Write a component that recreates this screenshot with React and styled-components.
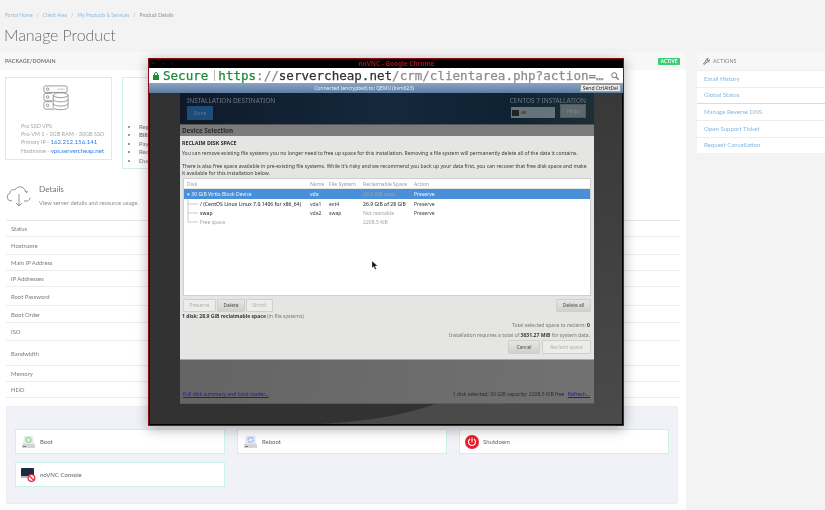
import React from "react";
import styled, { createGlobalStyle } from "styled-components";
import { Wrench } from "lucide-react";

const Global = createGlobalStyle`
  html, body { margin: 0; padding: 0; background: #f3f3f3; }
  body { font-family: Lato, "Noto Sans", sans-serif; overflow: hidden; }
  * { box-sizing: border-box; }
`;

const Page = styled.div`
  position: relative; width: 825px; height: 510px; overflow: hidden;
  background: #f3f3f3; filter: blur(0.35px);
`;
const Crumbs = styled.div`
  display: flex; gap: 4px; height: 24px; padding: 11px 0 0 5px;
  font-size: 5px; line-height: 8px; color: #a8adb2;
`;
const CrumbLink = styled.span` color: ${p => (p.$current ? "#8d9398" : "#86bde8")}; `;
const Title = styled.h1`
  margin: 0; height: 28px; padding-left: 4px; font-size: 16px; letter-spacing: -.1px; font-weight: 300; line-height: 22px; color: #666c72;
`;
const Columns = styled.div` display: grid; grid-template-columns: 686px 128px; column-gap: 11px; `;
const Main = styled.main` background: #fff; height: 458px; `;
const PanelHead = styled.div`
  display: flex; align-items: center; justify-content: space-between; height: 18px; padding: 0 6px 0 5px;
  background: #f7f7f7; font-size: 5.3px; font-weight: 700; letter-spacing: .1px; color: #70757a; text-transform: uppercase;
`;
const Badge = styled.span`
  background: #3ccf7a; color: #fff; font-size: 4.6px; line-height: 7px; padding: 0 2.500px; border-radius: 1px;
`;
const Cards = styled.div` display: flex; gap: 10px; padding: 7px 5px 0; height: 115px; align-items: flex-start; `;
const InfoCard = styled.div`
  width: ${p => p.$w}px; height: ${p => p.$h}px; border: 1px solid #cdf3e8; flex: none; background: #fff;
`;
const ProductCard = styled(InfoCard)`
  display: flex; flex-direction: column; align-items: center; padding: 7px 6px 0 0;
`;
const ProductLines = styled.div`
  align-self: flex-start; margin: 11px 0 0 15px; font-size: 5.5px; line-height: 8.2px; color: #a2a5a8; white-space: nowrap;
`;
const Accent = styled.span` color: #2e7be8; font-size: 6.1px; `;
const Bullets = styled.ul`
  margin: 45px 0 0; padding: 0 0 0 16px; font-size: 6.1px; line-height: 8.4px; color: #777; white-space: nowrap;
`;
const DetailsHead = styled.div` display: flex; gap: 8px; height: 33px; padding-left: 6px; margin-bottom: 2px; `;
const DetailsTitle = styled.div` font-size: 8.2px; line-height: 11px; color: #71767b; margin-top: -1px; `;
const DetailsSub = styled.div` font-size: 5.8px; line-height: 8px; color: #8b8f93; margin-top: 4px; `;
const Rows = styled.div` margin: 0 6px; border-top: 1px solid #e8e8e8; `;
const Row = styled.div`
  display: flex; align-items: center; height: ${p => p.$h}px; padding-left: 5px;
  border-bottom: 1px solid #ececec; font-size: 5.9px; color: #777b7f;
`;
const ActionsPanel = styled.section`
  margin: 8px 8px 0 6px; height: 98px; padding: 22px 8px 0; background: #f1f2f7; border: 1px solid #ebecf0; border-radius: 2px;
  display: grid; grid-template-columns: repeat(3, 210px); grid-auto-rows: 25px; gap: 8px 12px;
`;
const ActionButton = styled.div`
  display: flex; align-items: center; gap: 4px; padding-left: 5px; background: #fff; border: 1px solid #cdf3e8;
  font-size: 6px; color: #5f6468;
`;
const Side = styled.aside` height: 101px; background: #fff; `;
const SideHead = styled(PanelHead)`
  justify-content: flex-start; gap: 3px; padding-left: 6px; color: #7c8186; font-weight: 400;
`;
const SideItem = styled.div`
  height: ${p => p.$h}px; display: flex; align-items: center; padding: 0 0 2px 7px; font-size: 6.1px; color: #82b8e6;
  border-top: 1px solid ${p => (p.$strong ? "#dcdcdc" : "#eeeeee")};
`;

/* noVNC window */
const VncWindow = styled.div`
  position: absolute; left: 148px; top: 58px; width: 476px; height: 368px;
  display: flex; flex-direction: column; background: #000; border: 1px solid #8c0e14; box-shadow: 0 3px 12px rgba(0,0,0,.32);
`;
const TitleBar = styled.div`
  position: relative; height: 9px; flex: none; padding-left: 21px; text-align: center; font: 700 6.4px/9px "Noto Sans", sans-serif; color: #a3121a;
`;
const WinDots = styled.span`
  position: absolute; left: 3px; top: 0; display: flex; gap: 7px; font-size: 5px; color: #6e1014;
`;
const UrlBar = styled.div`
  display: flex; align-items: center; height: 15px; flex: none; padding: 0 4px; background: #fff;
  font: 12.55px/15px "DejaVu Sans Mono", monospace; white-space: nowrap; color: #333; -webkit-text-stroke: .25px currentColor;
`;
const Lock = styled.svg` width: 6px; height: 8px; margin-right: 4px; flex: none; `;
const Green = styled.span` color: #1f8a3c; `;
const Sep = styled.span` width: 1px; height: 11px; background: #bbb; margin: 0 3px 0 6px; flex: none; `;
const Faded = styled.span` color: #8d8d8d; `;
const Search = styled.svg` width: 8px; height: 8px; margin-left: auto; flex: none; `;
const StatusBar = styled.div`
  position: relative; height: 10px; flex: none; padding-right: 44px; text-align: center; background: linear-gradient(#8ba3c4, #5e7da6);
  font: 5px/10px "Noto Sans", sans-serif; color: #eef2f7;
`;
const CtrlBtn = styled.span`
  position: absolute; right: 2px; top: 1px; height: 8px; width: 41px; background: #e8e8e8; color: #222; font-size: 5px; line-height: 7px; border: 1px solid #999;
`;
const Desktop = styled.div`
  position: relative; flex: 1; margin: 0 1px 1px; padding-left: 30px; background: #323232; overflow: hidden;
  font-family: "Noto Sans", sans-serif;
`;
const Wallpaper = styled.svg` position: absolute; inset: 0; width: 100%; height: 100%; `;
const Anaconda = styled.div` position: relative; width: 414px; height: 311px; display: flex; flex-direction: column; `;
const Hub = styled.div`
  display: flex; justify-content: space-between; height: 31px; flex: none; padding: 3px 8px 0 7px;
  background: linear-gradient(90deg, #0e1a2a, #15283c 50%, #0f2233 80%, #1c2f37);
  font-size: 6.5px; line-height: 9px; color: #6e7a84;
`;
const HubCol = styled.div` display: flex; flex-direction: column; align-items: ${p => p.$right ? "flex-end" : "flex-start"}; `;
const HubButtons = styled.div` display: flex; gap: 5px; align-items: flex-end; margin-top: -1px; `;
const Done = styled.div`
  width: 26px; height: 14px; margin-top: 1px; background: #1d4c78; color: #58799a; font-size: 5px; line-height: 14px; text-align: center;
`;
const Kbd = styled.div`
  display: flex; align-items: center; gap: 2px; width: 44px; height: 11px; padding-left: 1px; background: #66747a; color: #1a1a1a; font-size: 4.6px;
`;
const KbdIcon = styled.span` width: 7px; height: 6px; background: #222; `;
const HelpBtn = styled.div`
  width: 26px; height: 14px; background: #5d696d; color: #7f8a8d; border: 1px solid #4f5a5e; font-size: 5px; line-height: 12px; text-align: center;
`;
const SpokeBar = styled.div`
  height: 12px; flex: none; padding-left: 2px; background: #7b7b7b; border-top: 1px solid #555;
  font-size: 6.3px; line-height: 11px; font-weight: 700; color: #2c2c2c;
`;
const Dialog = styled.div`
  height: 224px; flex: none; display: flex; flex-direction: column; padding: 4px 3px 0; background: #e5e5e3; color: #3a3a3a; font-size: 5.07px; line-height: 7px;
  border-bottom: 1px solid #a8a8a8; white-space: nowrap;
`;
const DialogHead = styled.div` font-weight: 700; font-size: 5.3px; margin-left: -1px; color: #2c2c2c; `;
const Para = styled.p` margin: ${p => p.$top}px 0 0 -1px; `;
const Table = styled.div`
  height: 118px; flex: none; margin: 1px 0 0; background: #fff; border: 1px solid #cfcfcd; position: relative;
`;
const TableRow = styled.div`
  display: grid; grid-template-columns: 125px 19px 34px 51px 1fr; height: ${p => p.$h}px; line-height: ${p => p.$h}px; padding-left: 1px;
  background: ${p => (p.$selected ? "#4a90d9" : "transparent")}; color: ${p => (p.$selected ? "#f4f8fc" : p.$dim ? "#a3a3a3" : "#3a3a3a")};
  ${p => p.$head && "color:#9a9a9a; border-bottom:1px solid #e4e4e4;"}
`;
const Cell = styled.span`
  padding-left: ${p => p.$pad || 0}px; ${p => p.$dim && "color:#a3a3a3;"} ${p => p.$b && "font-weight:500;"}
  overflow: hidden;
`;
const Spacer = styled.div` height: ${p => p.$h}px; `;
const ToolRow = styled.div` display: flex; justify-content: space-between; margin-top: 3px; `;
const ToolGroup = styled.div` display: flex; gap: 1px; `;
const Gtk = styled.div`
  width: ${p => p.$w}px; height: ${p => p.$h || 13}px; line-height: ${p => (p.$h || 13) - 2}px; text-align: center;
  font-size: 4.9px; border: 1px solid #cfcfcd; border-radius: 1px;
  color: ${p => (p.$off ? "#b0b0ae" : "#4c4c4c")};
  background: ${p => (p.$off ? "#ececea" : "linear-gradient(#e6e6e4,#d0d0ce)")};
`;
const Reclaimable = styled.div` margin: 1px 0 0 -1px; `;
const Muted = styled.span` color: #777; `;
const RightLine = styled.div` text-align: right; margin-top: ${p => p.$top}px; padding-right: 1px; `;
const DialogActions = styled.div` display: flex; justify-content: flex-end; gap: 2px; margin-top: 1px; `;
const Bottom = styled.div`
  height: 44px; flex: none; display: flex; justify-content: space-between; align-items: flex-end; padding: 0 4px 5px 3px;
  background: linear-gradient(100deg, #646464, #727272); border-bottom: 1px solid #5a5a5a; font-size: 5.07px; line-height: 7px; color: #2c2c2c;
`;
const DiskLink = styled.span` color: #1e1e96; text-decoration: underline; margin-left: ${p => p.$left || 0}px; `;
const Pointer = styled.svg` position: absolute; left: 223px; top: 202px; width: 6px; height: 9px; `;
const TreeLines = styled.svg` position: absolute; left: 2px; top: 20px; width: 14px; height: 29px; `;

const ServerIcon = () => (
  <svg width="26" height="26" viewBox="0 0 28 28" fill="none" stroke="#888" strokeWidth=".9">
    <rect x="1" y="1" width="25" height="7" rx="1.5" />
    <circle cx="5" cy="4.5" r="1.4" />
    <path d="M16 4.5h7" strokeDasharray="1 .6" />
    <path d="M10 9H3a2 2 0 0 0-2 2v4a2 2 0 0 0 2 2h7M10 18H3a2 2 0 0 0-2 2v4a2 2 0 0 0 2 2h9" />
    <circle cx="5" cy="13" r="1.4" /><circle cx="5" cy="22" r="1.4" />
    <ellipse cx="19" cy="11" rx="8" ry="2.6" />
    <path d="M11 11v13c0 1.5 3.6 2.6 8 2.6s8-1.1 8-2.6V11M11 15.5c0 1.5 3.6 2.6 8 2.6s8-1.1 8-2.6M11 20c0 1.5 3.6 2.6 8 2.6s8-1.1 8-2.6" />
  </svg>
);
const CloudIcon = () => (
  <svg width="25" height="22" viewBox="0 0 25 22" fill="none" stroke="#777" strokeWidth=".8" style={{ flex: "none" }}>
    <path d="M6 16H5a4 4 0 0 1-1-7.8C4.5 4.5 7 4 9 5c1-3 6-4.500 9-1.500 1 1 1.500 2 1.500 3.500M20 8l1.500-1.500M19 6.500l2.500.5M18 16h3.500c1.500-.5 2.500-2 2.500-3.500" />
    <path d="M13 9v12M10 18l3 3 3-3" />
  </svg>
);
const DiskIcon = ({ tint, children }) => (
  <svg width="15" height="13" viewBox="0 0 15 13" style={{ flex: "none" }}>
    <rect x="1" y="9" width="13" height="4" fill="#d5d5d5" />
    <rect x="2" y="11" width="3" height="1" fill="#777" />
    <path d="M2 9l1-8h9l1 8z" fill={tint} />
    {children}
  </svg>
);
const ConsoleIcon = () => (
  <svg width="15" height="14" viewBox="0 0 15 14" style={{ flex: "none" }}>
    <rect x="0" y="0" width="13" height="9" rx="1" fill="#1d2a44" />
    <rect x="0" y="8" width="13" height="2" fill="#bbb" />
    <circle cx="10.500" cy="10" r="3.300" fill="#fff" stroke="#ea2b3a" strokeWidth="1.300" />
    <path d="M8.300 8l4.400 4" stroke="#ea2b3a" strokeWidth="1.200" />
  </svg>
);
const PowerIcon = () => (
  <svg width="14" height="14" viewBox="0 0 14 14" style={{ flex: "none" }}>
    <circle cx="7" cy="7" r="7" fill="#ec1c2c" />
    <path d="M4.800 4.300a3.500 3.500 0 1 0 4.400 0M7 3v3.800" fill="none" stroke="#fff" strokeWidth="1.100" strokeLinecap="round" />
  </svg>
);

const rows = [["Status", 16], ["Hostname", 18], ["Main IP Address", 16], ["IP Addresses", 16], ["Root Password", 19], ["Boot Order", 17], ["ISO", 18], ["Bandwidth", 25], ["Memory", 16], ["HDD", 16]];
const actions = [["Email History", 17], ["Global Status", 16], ["Manage Reverse DNS", 17, true], ["Open Support Ticket", 17], ["Request Cancellation", 16]];

export default function App() {
  return (
    <Page>
      <Global />
      <Crumbs>
        <CrumbLink>Portal Home</CrumbLink><span>/</span>
        <CrumbLink>Client Area</CrumbLink><span>/</span>
        <CrumbLink>My Products &amp; Services</CrumbLink><span>/</span>
        <CrumbLink $current>Product Details</CrumbLink>
      </Crumbs>
      <Title>Manage Product</Title>
      <Columns>
        <Main>
          <PanelHead>Package/Domain<Badge>ACTIVE</Badge></PanelHead>
          <Cards>
            <ProductCard $w={107} $h={83}>
              <ServerIcon />
              <ProductLines>
                Pro SSD VPS<br />
                Pro-VM 1 - 2GB RAM - 30GB SSD<br />
                Primary IP - <Accent>162.212.156.141</Accent><br />
                Hostname - <Accent>vps.servercheap.net</Accent>
              </ProductLines>
            </ProductCard>
            <InfoCard $w={200} $h={92}>
              <Bullets>
                <li>Registration Date</li>
                <li><b>Billing Cycle</b></li>
                <li>Payment Method</li>
                <li>Recurring Amount</li>
                <li>Due Date</li>
              </Bullets>
            </InfoCard>
          </Cards>
          <DetailsHead>
            <CloudIcon />
            <div>
              <DetailsTitle>Details</DetailsTitle>
              <DetailsSub>View server details and resource usage.</DetailsSub>
            </div>
          </DetailsHead>
          <Rows>
            {rows.map(([label, h]) => <Row key={label} $h={h}>{label}</Row>)}
          </Rows>
          <ActionsPanel>
            <ActionButton>
              <DiskIcon tint="#e3efe6"><circle cx="7.500" cy="5" r="2.600" fill="none" stroke="#7fcf94" strokeWidth="1" /></DiskIcon>Boot
            </ActionButton>
            <ActionButton>
              <DiskIcon tint="#dfe6f7"><circle cx="7.500" cy="5" r="2.600" fill="none" stroke="#8fa9e6" strokeWidth="1" strokeDasharray="3 1" /></DiskIcon>Reboot
            </ActionButton>
            <ActionButton><PowerIcon />Shutdown</ActionButton>
            <ActionButton><ConsoleIcon />noVNC Console</ActionButton>
          </ActionsPanel>
        </Main>
        <Side>
          <SideHead><Wrench size={7} strokeWidth={3} color="#666" />Actions</SideHead>
          {actions.map(([label, h, strong]) => <SideItem key={label} $h={h} $strong={strong}>{label}</SideItem>)}
        </Side>
      </Columns>

      <VncWindow>
        <TitleBar><WinDots><span>×</span><span>–</span><span>▫</span></WinDots>noVNC - Google Chrome</TitleBar>
        <UrlBar>
          <Lock viewBox="0 0 6 8"><rect y="3" width="6" height="5" fill="#1f8a3c" /><path d="M1.500 3.500V2a1.500 1.500 0 0 1 3 0v1.500" fill="none" stroke="#1f8a3c" /></Lock>
          <Green>Secure</Green><Sep />
          <Green>https</Green><Faded>://</Faded>servercheap.net<Faded>/crm/clientarea.php?action=…</Faded>
          <Search viewBox="0 0 8 8" fill="none" stroke="#777"><circle cx="3.200" cy="3.200" r="2.500" /><path d="M5 5l2.700 2.700" strokeWidth="1.300" /></Search>
        </UrlBar>
        <StatusBar>Connected (encrypted) to: QEMU (kvm623)<CtrlBtn>Send CtrlAltDel</CtrlBtn></StatusBar>
        <Desktop>
          <Wallpaper viewBox="0 0 472 331" preserveAspectRatio="none">
            <defs>
              <linearGradient id="wp" x1="0" y1="0" x2="0" y2="1"><stop offset="0" stopColor="#383838" /><stop offset="1" stopColor="#4a4a4a" /></linearGradient>
            </defs>
            <path d="M170 331C230 328 270 318 300 305L472 270V331Z" fill="#4a4a4a" />
            <rect x="444" width="28" height="331" fill="url(#wp)" />
          </Wallpaper>
          <Anaconda>
            <Hub>
              <HubCol>
                INSTALLATION DESTINATION
                <Done>Done</Done>
              </HubCol>
              <HubCol $right>
                CENTOS 7 INSTALLATION
                <HubButtons>
                  <Kbd><KbdIcon />us</Kbd>
                  <HelpBtn>Help!</HelpBtn>
                </HubButtons>
              </HubCol>
            </Hub>
            <SpokeBar>Device Selection</SpokeBar>
            <Dialog>
              <DialogHead>RECLAIM DISK SPACE</DialogHead>
              <Para $top={3}>You can remove existing file systems you no longer need to free up space for this installation.  Removing a file system will permanently delete all of the data it contains.</Para>
              <Para $top={6}>There is also free space available in pre-existing file systems.  While it's risky and we recommend you back up your data first, you can recover that free disk space and make<br />it available for this installation below.</Para>
              <Table>
                <TableRow $head $h={10}>
                  <Cell $pad={2}>Disk</Cell><Cell>Name</Cell><Cell>File System</Cell><Cell>Reclaimable Space</Cell><Cell>Action</Cell>
                </TableRow>
                <TableRow $selected $h={10}>
                  <Cell $pad={2}>▾ 30 GiB Virtio Block Device</Cell><Cell>vda</Cell><Cell /><Cell $dim>26.9 GiB total</Cell><Cell>Preserve</Cell>
                </TableRow>
                <Spacer $h={1} />
                <TableRow $h={9}>
                  <Cell $pad={15} $b>/ (CentOS Linux Linux 7.0.1406 for x86_64)</Cell><Cell>vda1</Cell><Cell>ext4</Cell><Cell $b>26.9 GiB of 28 GiB</Cell><Cell>Preserve</Cell>
                </TableRow>
                <TableRow $h={9}>
                  <Cell $pad={15} $b>swap</Cell><Cell>vda2</Cell><Cell>swap</Cell><Cell $dim>Not resizable</Cell><Cell>Preserve</Cell>
                </TableRow>
                <TableRow $h={9}>
                  <Cell $pad={15} $dim>Free space</Cell><Cell /><Cell /><Cell $dim>2208.5 KiB</Cell><Cell />
                </TableRow>
                <TreeLines viewBox="0 0 14 29" fill="none" stroke="#b5b5b5" strokeWidth=".7"><path d="M2 0V23H12M2 5H12M2 14H12" /></TreeLines>
              </Table>
              <ToolRow>
                <ToolGroup>
                  <Gtk $w={33} $off>Preserve</Gtk>
                  <Gtk $w={28}>Delete</Gtk>
                  <Gtk $w={27} $off>Shrink</Gtk>
                </ToolGroup>
                <Gtk $w={35}>Delete all</Gtk>
              </ToolRow>
              <Reclaimable><b>1 disk; 28.9 GiB reclaimable space</b> <Muted>(in file systems)</Muted></Reclaimable>
              <RightLine $top={2}><Muted>Total selected space to reclaim: </Muted><b>0</b></RightLine>
              <RightLine $top={3}><Muted>Installation requires a total of </Muted><b>3631.27 MiB</b><Muted> for system data.</Muted></RightLine>
              <DialogActions>
                <Gtk $w={32} $h={14}>Cancel</Gtk>
                <Gtk $w={49} $h={14} $off>Reclaim space</Gtk>
              </DialogActions>
            </Dialog>
            <Bottom>
              <DiskLink>Full disk summary and boot loader...</DiskLink>
              <span>1 disk selected; 30 GiB capacity; 2208.5 KiB free <DiskLink $left={2}>Refresh...</DiskLink></span>
            </Bottom>
          </Anaconda>
        </Desktop>
        <Pointer viewBox="0 0 6 9"><path d="M0 0v7l1.800-1.500L3 8.500l1.300-.5L3 5h2.600z" fill="#111" stroke="#fff" strokeWidth=".3" /></Pointer>
      </VncWindow>
    </Page>
  );
}
